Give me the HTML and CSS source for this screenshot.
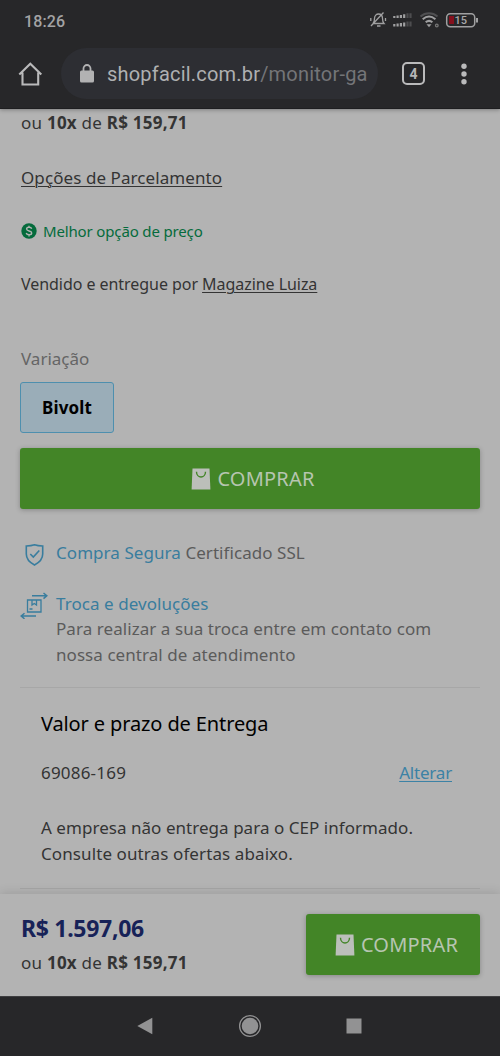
FILE: index.html
```
<!DOCTYPE html>
<html lang="pt-BR">
<head>
<meta charset="utf-8">
<title>shopfacil.com.br</title>
<link rel="stylesheet" href="styles.css">
</head>
<body>
<div class="phone">
  <header class="chrome">
    <div class="status">
      <span class="clock">18:26</span>
      <svg class="status-icons" width="110" height="20" viewBox="0 0 110 20" fill="none" stroke="#a0a0a1" stroke-width="1.3">
        <path d="M3 13.500h11c-1.500-1.500-1.500-2.500-1.500-5 0-6-8-6-8 0 0 2.500 0 3.500-1.500 5M7 16h3.500M.8 8v3M15.500 8v3M1 16L13.500 2.500"/>
        <g stroke-width="2.200"><path d="M24.300 6v2M27.600 5.500V8M30.900 5v3M34.200 4.200V8M24.300 14v2.500M27.600 13.500v3M30.900 13v3.500M34.200 12.500v4"/><path stroke="#4d4d4f" d="M37.500 3.200V8M40.500 3.200V8M37.500 11.500v5M40.500 11.500v5"/></g>
        <g stroke-width="2"><path stroke="#505052" d="M50.500 6.500c5-4.300 12-4.300 17 0"/><path d="M52.700 9.200c4-3.500 8.700-3.500 12.700 0M55.700 12.300c2.200-1.900 4.500-1.900 6.700 0"/></g>
        <path fill="#a0a0a1" stroke="none" d="M56.500 14.300h5L59 17.300z"/><circle cx="66.800" cy="15.500" r="1.300" stroke="#777"/>
        <rect x="76.700" y="3.700" width="28" height="13" rx="3.500" stroke-width="1.500"/>
        <path fill="#85101d" stroke="none" d="M79 6h5v8h-5z"/><path stroke-width="2" d="M107 8v4.500"/>
        <text x="84.500" y="14.300" class="battery">15</text>
      </svg>
    </div>
    <div class="toolbar">
      <svg class="home" width="26" height="26" viewBox="0 0 26 26" fill="none" stroke="#bababb" stroke-width="2.100"><path d="M2.300 13.500L13.300 2.700l11 10.800M5.500 11.500v12h15.700v-12"/></svg>
      <div class="address">
        <svg width="16" height="20" viewBox="0 0 16 20"><rect x="1" y="6.500" width="14" height="12" rx="1.500" fill="#b2b2b3"/><path d="M4.500 7V4.500a3.500 3.500 0 0 1 7 0V7" fill="none" stroke="#b2b2b3" stroke-width="1.800"/></svg>
        <span class="url">shopfacil.com.br<span class="path">/monitor-ga</span></span>
      </div>
      <span class="tabs">4</span>
      <svg class="more" width="8" height="24" viewBox="0 0 8 24" fill="#bababb"><circle cx="4" cy="4.300" r="2.700"/><circle cx="4" cy="12" r="2.700"/><circle cx="4" cy="19.700" r="2.700"/></svg>
    </div>
  </header>

  <main class="product">
    <p class="installments">ou <b>10x</b> de <b>R$ 159,71</b></p>
    <p class="options"><a>Opções de Parcelamento</a></p>
    <p class="best"><svg width="16" height="16" viewBox="0 0 16 16"><circle cx="8" cy="8" r="7.700" fill="#056b3c"/><path d="M10.700 5.700C10 3.700 5.600 3.900 5.600 6c0 2.600 5.100 1.300 5.100 4 0 2.400-4.800 2.400-5.500 0M8 2.700v1.800M8 11.600v1.800" fill="none" stroke="#b3b3b3" stroke-width="1.400"/></svg><span>Melhor opção de preço</span></p>
    <p class="seller">Vendido e entregue por <a>Magazine Luiza</a></p>
    <p class="variation">Variação</p>
    <div class="choice">Bivolt</div>
    <div class="buy">
      <svg width="20" height="22" viewBox="0 0 20 22"><path d="M1.500.5h17l.9 21H.6z" fill="#bcbfba"/><path d="M5.500 3.700c0 7 9 7 9 0" fill="none" stroke="#438527" stroke-width="1.400"/></svg>
      <span>COMPRAR</span>
    </div>
    <div class="benefit secure">
      <svg width="28" height="26" viewBox="0 0 28 26" fill="none" stroke="#397d9e" stroke-width="1.600"><path d="M14.500 4.800c-2.700 1-5.300 1.200-8.200 1.200v8c0 5.300 4 8.800 8.200 11 4.200-2.200 8.200-5.700 8.200-11V6c-2.900 0-5.500-.2-8.200-1.200z"/><path d="M10.300 14l3 3 6-6.500"/></svg>
      <p><em>Compra Segura</em> <span>Certificado SSL</span></p>
    </div>
    <div class="benefit exchange">
      <svg width="28" height="28" viewBox="0 0 28 28" fill="none" stroke="#397d9e" stroke-width="1.300"><path d="M7.500 9h13.500v12H7.500zM12 9v5l2.250-1.500L16.500 14V9M9.500 18h3"/><path d="M12 4.800h14M23.500 2l3.300 2.800-3.300 2.800M16 25H2M4.500 22.200L1.200 25l3.300 2.800" stroke-width="1.500"/></svg>
      <p><em>Troca e devoluções</em><br>Para realizar a sua troca entre em contato com<br>nossa central de atendimento</p>
    </div>
    <section class="delivery">
      <h2>Valor e prazo de Entrega</h2>
      <div class="zip"><span>69086-169</span><a>Alterar</a></div>
      <p class="notice">A empresa não entrega para o CEP informado.<br><span class="offers">Consulte outras ofertas abaixo.</span></p>
    </section>
  </main>

  <footer class="sticky">
    <div>
      <p class="price">R$ 1.597,06</p>
      <p class="installments">ou <b>10x</b> de <b>R$ 159,71</b></p>
    </div>
    <div class="buy small">
      <svg width="20" height="22" viewBox="0 0 20 22"><path d="M1.500.5h17l.9 21H.6z" fill="#bcbfba"/><path d="M5.500 3.700c0 7 9 7 9 0" fill="none" stroke="#438527" stroke-width="1.400"/></svg>
      <span>COMPRAR</span>
    </div>
  </footer>
  <nav class="system">
    <svg width="16" height="18" viewBox="0 0 16 18"><path d="M.3 9L15.300.7v16.600z" fill="#929293"/></svg>
    <svg width="24" height="24" viewBox="0 0 24 24"><circle cx="12" cy="12" r="10.400" fill="none" stroke="#929293" stroke-width="1.300"/><circle cx="12" cy="12" r="8.300" fill="#929293"/></svg>
    <svg width="16" height="16" viewBox="0 0 16 16"><path d="M.5.500h15v15H.5z" fill="#929293"/></svg>
  </nav>
</div>
</body>
</html>
```
FILE: styles.css
```
* { box-sizing: border-box; }
body { margin: 0; background: #b3b3b3; }
p, h2 { margin: 0; font-weight: 400; white-space: nowrap; }
em { font-style: normal; color: #397d9e; }
a { text-decoration: underline; text-underline-offset: 2px; text-decoration-thickness: 1px; }
svg { display: block; flex: none; }
.phone { width: 500px; height: 1056px; display: flex; flex-direction: column; overflow: hidden; font: 17px/25px "Noto Sans", sans-serif; color: #343434; }
.chrome { flex: none; height: 109px; background: #272729; border-bottom: 1px solid #1e1e20; font-family: Roboto, sans-serif; color: #b5b5b6; box-shadow: 0 1px 4px rgba(0,0,0,.3); }
.status { height: 48px; padding: 10px 20px 0 24px; display: flex; justify-content: space-between; }
.clock { padding-top: 1px; font-size: 16px; line-height: 21px; font-weight: 500; letter-spacing: .1px; color: #a3a3a4; }
.battery { font: 500 11px Roboto, sans-serif; fill: #a8a8a9; stroke: none; }
.toolbar { height: 51px; display: flex; align-items: center; padding-left: 17px; }
.address { width: 317px; height: 51px; margin-left: 18px; padding-left: 18px; border-radius: 26px; background: #2d2e33; display: flex; align-items: center; }
.url { margin-left: 12px; padding-top: 2px; font-size: 20px; letter-spacing: .2px; white-space: nowrap; color: #afb0b1; }
.path { color: #747578; }
.tabs { width: 23px; height: 23px; margin-left: 24px; border: 2px solid #bababb; border-radius: 5px; font-size: 14px; line-height: 20px; font-weight: 700; text-align: center; }
.more { margin-left: 35px; }
.product { height: 785px; flex: none; padding: 1px 20px 0; }
.installments { padding-left: 1px; letter-spacing: .24px; }
.options { margin-top: 30px; padding-left: 1px; letter-spacing: .08px; }
.best { margin-top: 29px; padding-left: 1px; display: flex; align-items: center; gap: 6px; font-size: 15px; line-height: 24px; letter-spacing: -.15px; color: #056b3c; }
.seller { margin-top: 29px; padding-left: 1px; font-size: 16px; line-height: 24px; letter-spacing: -.05px; }
.variation { margin-top: 50px; padding-left: 1px; color: #656565; }
.choice { width: 94px; height: 51px; margin-top: 11px; border: 1px solid #4e8fae; border-radius: 3px; background: #9aadb8; color: #000; font-weight: 700; line-height: 49px; letter-spacing: .1px; text-align: center; }
.buy { height: 61px; margin-top: 15px; border-radius: 3px; background: #438527; box-shadow: 0 1px 5px rgba(0,0,0,.25); color: #b7c5b1; display: flex; align-items: center; justify-content: center; gap: 6px; padding-left: 6px; font-size: 20px; letter-spacing: .2px; }
.benefit { display: flex; gap: 8px; color: #5b5b5b; line-height: 25.5px; letter-spacing: .06px; }
.secure { margin-top: 31px; }
.exchange { margin-top: 25px; }
.exchange p { margin-top: -.5px; }
.delivery { margin: 20px 0 0; height: 202px; border-top: 1px solid #a7a7a7; border-bottom: 1px solid #a5a5a5; padding: 21px 28px 0 21px; }
h2 { font-size: 20px; line-height: 30px; letter-spacing: -.12px; color: #000; }
.zip { margin-top: 21px; display: flex; justify-content: space-between; letter-spacing: .2px; }
.zip a { color: #3c82a5; letter-spacing: -.2px; }
.notice { margin-top: 30px; line-height: 25.5px; letter-spacing: .04px; }
.offers { letter-spacing: .1px; }
.sticky { flex: none; height: 102px; padding: 17px 20px 0; background: #b3b3b3; box-shadow: 0 -1px 10px rgba(0,0,0,.13); display: flex; justify-content: space-between; }
.price { padding-left: 1px; font-size: 23px; line-height: 32px; font-weight: 700; letter-spacing: -.3px; color: #172258; margin: 1px 0 6px; }
.small { width: 174px; margin-top: 3px; padding-left: 7px; }
.system { height: 60px; flex: none; padding: 0 138px 2px 137px; background: #272729; border-top: 1px solid #3e3e40; display: flex; align-items: center; justify-content: space-between; }
```
